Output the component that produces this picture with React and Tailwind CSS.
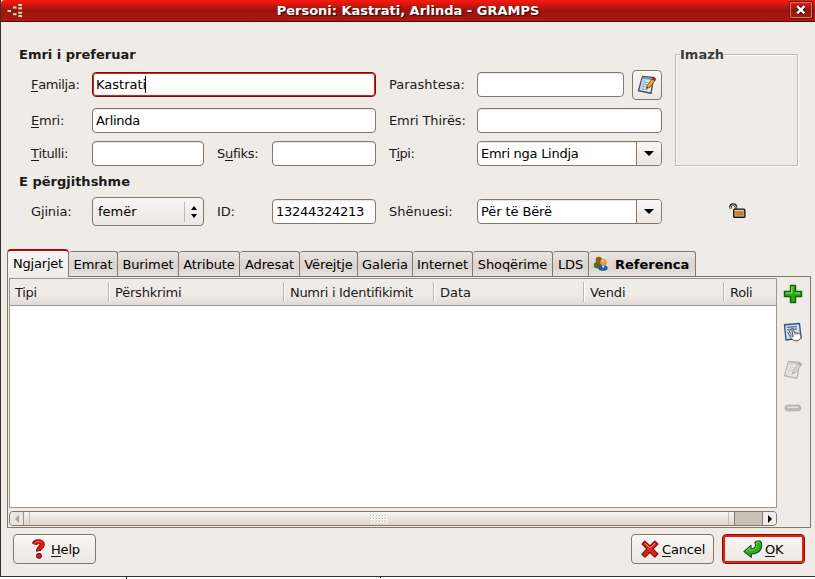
import React from 'react';

const tabs = [
  { name: 'Emrat', width: 'w-[49px]' },
  { name: 'Burimet', width: 'w-[61px]' },
  { name: 'Atribute', width: 'w-[61px]' },
  { name: 'Adresat', width: 'w-[60px]' },
  { name: 'Vërejtje', width: 'w-[58px]' },
  { name: 'Galeria', width: 'w-[55px]' },
  { name: 'Internet', width: 'w-[60px]' },
  { name: 'Shoqërime', width: 'w-[80px]' },
  { name: 'LDS', width: 'w-[36px]' },
];

const columns = [
  { name: 'Tipi', width: 'w-[99px] tracking-[-0.3px]' },
  { name: 'Përshkrimi', width: 'w-[175px] tracking-[-0.2px]' },
  { name: 'Numri i Identifikimit', width: 'w-[150px] tracking-[-0.3px]' },
  { name: 'Data', width: 'w-[150px]' },
  { name: 'Vendi', width: 'w-[140px] tracking-[-0.1px]' },
  { name: 'Roli', width: 'w-[52px] tracking-[-0.3px]' },
];

const BUTTON_BG = 'bg-linear-to-b from-[#faf8f7] from-0% via-[#f1eeeb] via-50% to-[#ece7e4]';
const TAB_BG = 'bg-linear-to-b from-[#e9e6e3] via-[#dad3ce] via-60% to-[#e8e3df]';

// label with a mnemonic underline
const Label = ({ before = '', letter = '', after = '', className = '' }) => (
  <span className={`whitespace-pre leading-[15px] shrink-0 ${className}`}>
    {before}
    {letter && <span className="border-b border-[#1a1a1a] inline-block h-[15px]">{letter}</span>}
    {after}
  </span>
);

const Entry = ({ value = '', className = '' }) => (
  <div className={`h-[25px] shrink-0 border border-[#857869] rounded-[4px] bg-white flex items-center pl-[3px] text-black whitespace-pre shadow-[inset_0_1px_0_#e9e6e3] ${className}`}>
    {value}
  </div>
);

const ComboEntry = ({ value, className = '' }) => (
  <div className="w-[185px] h-[25px] shrink-0 border border-[#857869] rounded-[4px] bg-white flex overflow-hidden text-black">
    <div className={`flex-1 flex items-center pl-[3px] shadow-[inset_0_1px_0_#e9e6e3] ${className}`}>{value}</div>
    <div className={`w-[25px] border-l border-[#857869] flex items-center justify-center ${BUTTON_BG}`}>
      <svg width="10" height="5" viewBox="0 0 10 5"><path d="M0 0h10L5 5z" fill="#000" /></svg>
    </div>
  </div>
);

const EditIcon = ({ muted }) => (
  <svg width="20" height="20" viewBox="0 0 20 20" className={muted ? 'grayscale opacity-35' : ''}>
    <path d="M5.5 1.500 16.500 2.500 14 18.300 1.500 15.800z" fill="#e3ebf5" stroke="#425468" strokeWidth="1.400" strokeLinejoin="round" />
    <path d="M5.800 2 15.800 3 15.300 5 5.200 4z" fill="#8096b0" />
    <path d="M4.800 5 3 14.500l3 .6L10 5.500z" fill="#bdcde2" />
    <path d="M6.500 7l5 .5M6 9.300l4 .4M5.500 11.500l3.500.4M5 14l6 .9" stroke="#98a9bd" strokeWidth="1" />
    <path d="M9.500 13.500 10.500 10 15 4 18 5.500 12.800 12.300z" fill="#f5a91d" stroke="#63400c" strokeWidth=".8" />
    <path d="M15.300 3.600 16.800 2.300l2.100 1.500-1 2z" fill="#d82020" stroke="#7a1515" strokeWidth=".6" />
    <path d="M9.300 13.800l.5-2 1.400 1z" fill="#222" />
  </svg>
);

const AddIcon = () => (
  <svg width="20" height="20" viewBox="0 0 20 20">
    <path d="M7.5 1.5h5v6h6v5h-6v6h-5v-6h-6v-5h6z" fill="#29ad13" stroke="#17620f" strokeWidth="1.5" strokeLinejoin="round" />
    <path d="M8.8 9V3h1.5M3 9h6M12 9h5" stroke="#8ce078" strokeWidth="1.2" fill="none" />
  </svg>
);

const ShareIcon = () => (
  <svg width="20" height="20" viewBox="0 0 20 20">
    <path d="M1.500 2.800 16.500 1.500 18 16 3 18z" fill="#d3e0f2" stroke="#38567f" strokeWidth="1.400" strokeLinejoin="round" />
    <path d="M4 5.300l10-.8M4.300 7.800l9.500-.8" stroke="#5f7da6" strokeWidth="1.400" />
    <path d="M4.500 10l2.500 4M6 8.500l2 4" stroke="#4c545e" />
    <path d="M8.800 6.500c1.200-.5 1.600.5 1.800 1.400l.7 2.600 4.200.8c1.600.4 2 1.800 2.200 3.200l.5 1.500-3.500 2.900-3.700-.3-3.800-3.300c-1-1.100.5-1.800 1.500-1l1.200.7z" fill="#fff" stroke="#3b3f45" strokeWidth=".9" />
    <path d="M12 10.700v2M14 11.200v1.800" stroke="#666" strokeWidth=".8" />
  </svg>
);

const RemoveIcon = () => (
  <svg width="20" height="20" viewBox="0 0 20 20">
    <rect x="2.200" y="7.200" width="15.600" height="5.600" rx="2.600" fill="#c0bab7" stroke="#b1aaa7" />
    <path d="M5 9.300h10" stroke="#e8e4e2" strokeWidth="1.300" />
  </svg>
);

const PeopleIcon = () => (
  <svg width="16" height="16" viewBox="0 0 16 16" className="shrink-0">
    <path d="M.8 11V8.500c0-2 2-2.800 4.500-2.800s4 1.500 4 4v2C7.300 13 3 12.800.8 11z" fill="#54701f" />
    <circle cx="5.800" cy="4" r="3.200" fill="#935812" />
    <path d="M5.500 13.500V11.500C5.500 9.500 7.500 9 10 9s4.500.8 4.500 2.800v1.700c-2 1.800-7 1.800-9 0z" fill="#2457a6" />
    <path d="M8.800 9.500l1.400 3 1.500-3z" fill="#dfe9f8" />
    <circle cx="10.500" cy="6.200" r="3.200" fill="#e8993a" />
    <circle cx="9.700" cy="5" r="1.300" fill="#f8c980" />
  </svg>
);

const LockIcon = () => (
  <svg width="18" height="16" viewBox="0 0 18 16">
    <path d="M1.500 5.500V3.500C2 .9 6.800.8 7 4v2" fill="none" stroke="#222" strokeWidth="2.600" />
    <path d="M1.500 5.200V3.600C2.200 1.500 6.500 1.300 7 4v2" fill="none" stroke="#d6d6d6" strokeWidth="1" />
    <rect x="4.700" y="6.200" width="11.200" height="8.200" rx="1" fill="#cc965a" stroke="#111" strokeWidth="1.300" />
    <path d="M5.800 7.500h9" stroke="#f0ca96" />
    <path d="M7.500 9.500h6M7.500 11.500h6" stroke="#8d6130" strokeWidth=".8" />
  </svg>
);

const HelpIcon = () => (
  <svg width="16" height="20" viewBox="0 0 16 20" fill="none">
    <path d="M3.200 5.200C4.500 2 11.300 2 11.300 5.500c0 3-4.300 3-3.600 6.700" stroke="#570b08" strokeWidth="5" />
    <circle cx="8" cy="16.800" r="2.900" fill="#570b08" />
    <path d="M3.500 5.400C4.500 2 11.300 2 11.300 5.500c0 3-4.300 3-3.700 6" stroke="#f41505" strokeWidth="3.200" />
    <circle cx="8" cy="16.800" r="1.900" fill="#f41505" />
    <path d="M4.500 3.500c1.800-1.400 4-1.500 5.800-.6" stroke="#ff7666" strokeWidth=".8" />
  </svg>
);

const CancelIcon = () => (
  <svg width="18" height="18" viewBox="0 0 18 18">
    <path d="M3.800 1.200 9 6l4.800-4.800 3 2.800-4.900 5 4.900 5-3 3L9 12.200 4 17l-3-2.800L5.900 9 1.200 4z" fill="#e9221c" stroke="#841411" strokeWidth="1.300" strokeLinejoin="round" />
    <path d="M3.800 3 9 8l5-4.800" fill="none" stroke="#ff9a90" strokeWidth="1" />
  </svg>
);

const OkIcon = () => (
  <svg width="20" height="18" viewBox="0 0 20 18">
    <path d="M1 11.500 8 5.500V8.800C12.300 9 13.600 6 11.800 2.500 13 .7 17 .4 18 2c2.300 6-1.300 11.800-9.500 11.800L8.300 17.300z" fill="#2fab25" stroke="#175c13" strokeWidth="1.200" strokeLinejoin="round" />
    <path d="M2.800 11.300 7 7.600v2.600c5.500.2 7.600-2.800 6.500-7.200.8-.8 2.300-1 3.200-.5" fill="none" stroke="#88db70" strokeWidth=".9" />
  </svg>
);

const TreeIcon = () => (
  <svg width="16" height="15" viewBox="0 0 16 15" className="shrink-0">
    <path d="M4 8h2.500M6.500 4.500v7M9.500 4.500h1.500M9.500 11h1.500M10.500 2v5M10.500 10v3.500" stroke="#6d2413" fill="none" />
    <g fill="#ead9b4">
      <rect x="0.500" y="7" width="3.500" height="2" />
      <rect x="6" y="3.500" width="3.500" height="2" />
      <rect x="6" y="10.200" width="3.500" height="2" />
      <rect x="11.300" y="1" width="3.700" height="2" />
      <rect x="11.300" y="4.300" width="3.700" height="2" />
      <rect x="11.300" y="8.800" width="3.700" height="2" />
      <rect x="11.300" y="12" width="3.700" height="2" />
    </g>
  </svg>
);

const TitleBar = () => (
  <div className="h-[22px] shrink-0 flex items-center bg-linear-to-b from-[#ff180c] via-[#961610] via-50% to-[#b2160e] border-b border-[#4d0d0a] pl-[6px] pr-[2px] pb-px rounded-tl-[4px]">
    <TreeIcon />
    <div className="flex-1 text-center text-white font-bold pl-[4px] [text-shadow:1px_1px_1px_#300]">
      Personi: Kastrati, Arlinda - GRAMPS
    </div>
    <div className="w-[24px] h-[18px] border border-[#64100c] rounded-[2px]">
      <div className="h-full border border-[#d87870] flex items-center justify-center rounded-[1px]">
        <svg width="10" height="10" viewBox="0 0 10 10">
          <path d="M1.500 1.500l7 7M8.500 1.500l-7 7" stroke="#300" strokeWidth="4" />
          <path d="M1.200 1.200l7.200 7.200M8.400 1.200l-7.200 7.200" stroke="#fff" strokeWidth="2.500" />
        </svg>
      </div>
    </div>
  </div>
);

const NameForm = () => (
  <div className="w-[661px] shrink-0 pl-[18px]">
    <h2 className="font-bold h-[15px] leading-[15px] mt-[25px]">Emri i preferuar</h2>

    <div className="mt-[8px] h-[30px] flex items-start pl-[12px]">
      <Label letter="F" after="amilja:" className="mt-[7px] w-[61px] tracking-[-0.35px]" />
      <div className="mt-[2px] w-[284px] h-[25px] shrink-0 border border-[#6b1512] rounded-[4px] bg-white flex items-center pl-[2px] text-black shadow-[inset_0_0_0_1px_#ee1b0f]">
        <span className="pl-px">Kastrati</span>
        <span className="w-px h-[17px] bg-black -ml-px" />
      </div>
      <Label before="Parashtesa:" className="mt-[7px] ml-[13px] w-[88px]" />
      <Entry className="mt-[2px] w-[147px]" />
      <div className={`ml-[8px] w-[30px] h-[30px] shrink-0 rounded-[4px] border border-[#857869] flex items-center justify-center ${BUTTON_BG}`}>
        <EditIcon />
      </div>
    </div>

    <div className="mt-[8px] h-[25px] flex items-center pl-[12px]">
      <Label letter="E" after="mri:" className="w-[61px] tracking-[-0.2px]" />
      <Entry value="Arlinda" className="w-[284px] tracking-[-0.3px]" />
      <Label before="Emri Thirës:" className="ml-[13px] w-[88px] tracking-[-0.1px]" />
      <Entry className="w-[185px]" />
    </div>

    <div className="mt-[8px] h-[25px] flex items-center pl-[12px]">
      <Label letter="T" after="itulli:" className="w-[61px] tracking-[-0.4px]" />
      <Entry className="w-[112px]" />
      <Label before="S" letter="u" after="fiks:" className="ml-[13px] w-[55px] tracking-[-0.3px]" />
      <Entry className="w-[104px]" />
      <Label before="T" letter="i" after="pi:" className="ml-[13px] w-[88px] tracking-[-0.5px]" />
      <ComboEntry value="Emri nga Lindja" className="tracking-[-0.27px]" />
    </div>

    <h2 className="font-bold h-[15px] leading-[15px] mt-[8px]">E përgjithshme</h2>

    <div className="mt-[8px] h-[29px] flex items-center pl-[12px]">
      <Label before="Gjinia:" className="w-[61px] tracking-[-0.15px]" />
      <div className={`w-[112px] h-[29px] shrink-0 rounded-[4px] border border-[#857869] flex items-center text-black pl-[5px] ${BUTTON_BG}`}>
        <span className="flex-1">femër</span>
        <div className="h-[20px] border-l border-[#bdb7b1] w-[19px] flex items-center justify-center">
          <svg width="6" height="12" viewBox="0 0 6 12"><path d="M0 4 3 0l3 4zM0 8h6l-3 4z" /></svg>
        </div>
      </div>
      <Label before="ID:" className="ml-[13px] w-[55px] tracking-[-0.2px]" />
      <Entry value="13244324213" className="w-[104px] tracking-[-0.27px]" />
      <Label before="Shënuesi:" className="ml-[13px] w-[88px]" />
      <ComboEntry value="Për të Bërë" className="tracking-[-0.1px]" />
    </div>
  </div>
);

const Notebook = () => (
  <div className="mx-[6px] w-[804px]">
    {/* Tabs */}
    <div className="flex items-end h-[27px] text-black">
      <div className="w-[62px] h-[28px] -mb-px z-10 border-x border-[#857869] border-t-2 border-t-[#a80b09] rounded-t-[4px] bg-linear-to-b from-[#f8f6f5] to-[#efebe7] text-center leading-[25px] shrink-0 tracking-[-0.2px]">
        Ngjarjet
      </div>
      {tabs.map((tab) => (
        <div key={tab.name} className={`${tab.width} h-[25px] shrink-0 border-t border-r border-[#857869] rounded-t-[3px] text-center leading-[25px] tracking-[-0.1px] ${TAB_BG}`}>
          {tab.name}
        </div>
      ))}
      <div className={`w-[107px] h-[25px] shrink-0 border-t border-r border-[#857869] rounded-t-[3px] flex items-center pl-[4px] font-bold ${TAB_BG}`}>
        <PeopleIcon />
        <span className="ml-[6px]">Referenca</span>
      </div>
    </div>

    <div className="h-[252px] border border-[#857869] flex p-px">
      <div className="w-[768px]">
        <div className="h-[230px] border border-[#a29589] bg-white">
          <div className="h-[27px] flex items-center bg-linear-to-b from-[#efebe7] from-60% to-[#dfdad5] border-b border-[#a29589]">
            {columns.map((column, i) => (
              <div key={column.name} className={`${column.width} h-[20px] leading-[22px] whitespace-nowrap ${i === 0 ? 'pl-[5px]' : 'pl-[6px]'} ${i < columns.length - 1 ? 'border-r border-[#bdb7b1] shadow-[1px_0_0_#fff]' : ''}`}>
                {column.name}
              </div>
            ))}
          </div>
        </div>

        {/* Horizontal scrollbar */}
        <div className="mt-[3px] h-[15px] flex border border-[#857869] rounded-[4px] bg-[#c9c0b8] overflow-hidden">
          <div className="w-[14px] border-r border-[#a29589] bg-[#e9e6e2] flex items-center justify-center">
            <svg width="4" height="8" viewBox="0 0 4 8"><path d="M4 0v8L0 4z" fill="#aaa49e" /></svg>
          </div>
          <div className="w-[711px] border-r border-[#857869] bg-linear-to-b from-[#f7f5f3] to-[#ddd7d0] flex justify-between">
            <div className="w-[6px] border-r border-[#c6bfb7]" />
            <svg width="18" height="9" viewBox="0 0 18 9" className="mt-[3px]">
              {[0, 3, 6].map((y) =>
                [0, 3, 6, 9, 12, 15].map((x) => (
                  <g key={`${x}-${y}`}>
                    <rect x={x} y={y} width="2" height="2" fill="#fff" />
                    <rect x={x} y={y} width="1" height="1" fill="#bdb5ad" />
                  </g>
                ))
              )}
            </svg>
            <div className="w-[6px] border-l border-[#c6bfb7]" />
          </div>
          <div className="w-[27px]" />
          <div className="flex-1 border-l border-[#857869] bg-[#f1eeeb] flex items-center justify-center">
            <svg width="4" height="8" viewBox="0 0 4 8"><path d="M0 0v8l4-4z" /></svg>
          </div>
        </div>
      </div>

      {/* Side buttons */}
      <div className="flex-1 flex flex-col items-center pt-[6px] gap-[18px]">
        <AddIcon />
        <ShareIcon />
        <EditIcon muted />
        <RemoveIcon />
      </div>
    </div>
  </div>
);

const App = () => {
  return (
    <div className="w-[815px] h-[579px] bg-white overflow-hidden font-['DejaVu_Sans',sans-serif] text-[13px] leading-[15px] text-[#1a1a1a]">
      <div className="h-[577px] bg-[#efebe7] border-l border-b border-[#3b3030] flex flex-col">
        <TitleBar />

        <div className="flex h-[227px] shrink-0">
          <NameForm />
          <div className="pl-[13px] pt-[25px]">
            <fieldset className="w-[123px] h-[119px] border border-[#bdb9b6] shadow-[inset_1px_1px_0_#fff,1px_1px_0_#fff] px-[4px]">
              <legend className="font-bold text-[#3b3e3b] h-[15px]">Imazh</legend>
            </fieldset>
            <div className="mt-[37px] pl-[54px]">
              <LockIcon />
            </div>
          </div>
        </div>

        <Notebook />

        {/* Dialog buttons */}
        <div className="flex mt-[6px] pl-[12px] pr-[10px] text-black">
          <div className={`w-[83px] h-[30px] rounded-[4px] border border-[#857869] flex items-center pl-[17px] ${BUTTON_BG}`}>
            <HelpIcon />
            <Label letter="H" after="elp" className="ml-[4px] tracking-[-0.2px]" />
          </div>
          <div className={`ml-auto w-[83px] h-[30px] rounded-[4px] border border-[#857869] flex items-center pl-[9px] ${BUTTON_BG}`}>
            <CancelIcon />
            <Label letter="C" after="ancel" className="ml-[3px] tracking-[-0.15px]" />
          </div>
          <div className={`ml-[8px] w-[83px] h-[30px] rounded-[4px] border border-[#6b1512] shadow-[inset_0_0_0_2px_#ee1b0f] flex items-center pl-[20px] ${BUTTON_BG}`}>
            <OkIcon />
            <Label letter="O" after="K" className="ml-[2px] tracking-[-0.2px]" />
          </div>
        </div>
      </div>
      <div className="flex pl-[126px] gap-[253px]">
        <span className="w-px h-[2px] bg-black" />
        <span className="w-px h-px bg-black" />
      </div>
    </div>
  );
};

export default App;
